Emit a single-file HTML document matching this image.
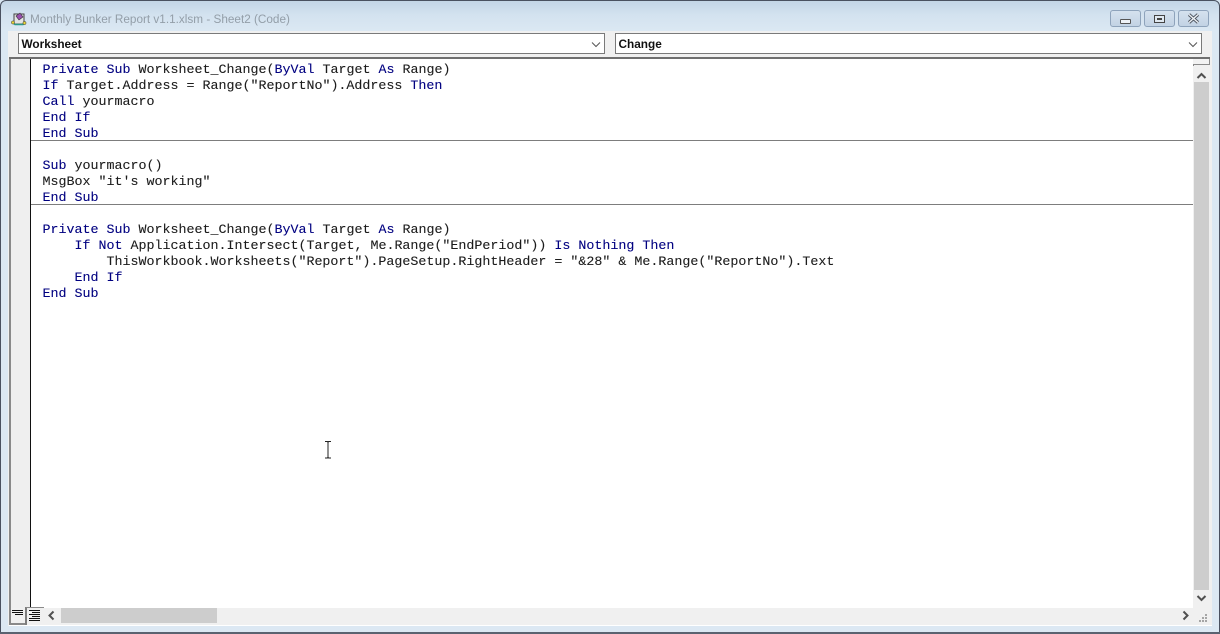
<!DOCTYPE html>
<html>
<head>
<meta charset="utf-8">
<style>
html,body{margin:0;padding:0;width:1220px;height:634px;overflow:hidden;background:#d9e6f2}
.a{position:absolute}
#win{position:absolute;left:0;top:0;width:1220px;height:634px;box-sizing:border-box;border:1px solid #4a5160;border-radius:6px 6px 0 0;background:linear-gradient(180deg,#c3d5e6 0,#d3e2ef 14px,#dbe8f3 30px,#dce8f3 100%)}
#title{position:absolute;left:30px;top:10.5px;font:11.75px/18px "Liberation Sans",sans-serif;color:#939ea8;white-space:nowrap}
#inner{position:absolute;left:8px;top:31px;width:1204px;height:595px;background:#f0f0f0}
.combo{position:absolute;top:33px;height:21px;box-sizing:border-box;border:1px solid #7a7a7a;background:#fff;font:bold 11.8px/20px "Liberation Sans",sans-serif;color:#111;padding-left:2.5px}
.code{position:absolute;left:42.5px;font:13.33px/16px "Liberation Mono",monospace;color:#1b1b1b;white-space:pre;-webkit-text-stroke:.1px #222}
.code b{font-weight:normal;color:#000080;-webkit-text-stroke:.1px #000080}
.rule{position:absolute;left:31px;width:1162px;height:1px;background:#7d7d7d}
.wb{position:absolute;top:10px;width:31px;height:17px;box-sizing:border-box;border:1px solid #8ea3bb;border-radius:3px;background:linear-gradient(180deg,#d5e2ee,#c2d3e4)}
</style>
</head>
<body>
<div id="win"></div>
<div id="inner"></div>
<svg class="a" style="left:11px;top:12px" width="16" height="15" viewBox="0 0 16 15">
<rect x="3" y="2" width="10" height="10" fill="#e4e4e4" stroke="#444"/>
<path d="M5 4L9 1 12 5 8 8Z" fill="#9a4fb0" stroke="#333" stroke-width=".6"/>
<path d="M1 10l3 2.5h8l2-2.5" stroke="#2a9a8a" stroke-width="1.5" fill="none"/>
<circle cx="2" cy="10.5" r="1.6" fill="#e8d53a" stroke="#333" stroke-width=".5"/>
<circle cx="13.5" cy="11" r="1.6" fill="#e8d53a" stroke="#333" stroke-width=".5"/>
</svg>
<div id="title">Monthly Bunker Report v1.1.xlsm - Sheet2 (Code)</div>
<div class="wb" style="left:1110px"><div class="a" style="left:9px;top:8px;width:9px;height:3px;border:1px solid #555;background:#eef2f6;border-radius:1px"></div></div>
<div class="wb" style="left:1144px"><div class="a" style="left:9px;top:4px;width:9px;height:6px;border:1px solid #444;background:#dfe8f0"></div><div class="a" style="left:12px;top:7px;width:5px;height:2px;background:#444"></div></div>
<div class="wb" style="left:1178px">
<svg class="a" style="left:8px;top:2px" width="13" height="11" viewBox="0 0 13 11"><path d="M2 1.5L11 9.5M11 1.5L2 9.5" stroke="#4d5560" stroke-width="3.2" fill="none"/><path d="M2 1.5L11 9.5M11 1.5L2 9.5" stroke="#eef2f6" stroke-width="1.4" fill="none"/></svg>
</div>

<div class="combo" style="left:18px;width:587px">Worksheet
<svg class="a" style="left:572px;top:7px" width="10" height="7" viewBox="0 0 10 7"><path d="M1 1.5L5 5.5 9 1.5" stroke="#555" stroke-width="1" fill="none"/></svg></div>
<div class="combo" style="left:615px;width:587px">Change
<svg class="a" style="left:572px;top:7px" width="10" height="7" viewBox="0 0 10 7"><path d="M1 1.5L5 5.5 9 1.5" stroke="#555" stroke-width="1" fill="none"/></svg></div>

<!-- editor -->
<div class="a" style="left:9px;top:57px;width:1201px;height:2px;background:#6f6f6f"></div>
<div class="a" style="left:9px;top:59px;width:2px;height:566px;background:#8a8a8a"></div>
<div class="a" style="left:11px;top:59px;width:19px;height:549px;background:#efefef"></div>
<div class="a" style="left:30px;top:59px;width:1px;height:549px;background:#111"></div>
<div class="a" style="left:31px;top:59px;width:1162px;height:549px;background:#fff"></div>

<div class="rule" style="top:140px"></div>
<div class="rule" style="top:204px"></div>

<div class="code" style="top:63px"><b>Private Sub</b> Worksheet_Change(<b>ByVal</b> Target <b>As</b> Range)
<b>If</b> Target.Address = Range("ReportNo").Address <b>Then</b>
<b>Call</b> yourmacro
<b>End If</b>
<b>End Sub</b>

<b>Sub</b> yourmacro()
MsgBox "it's working"
<b>End Sub</b>

<b>Private Sub</b> Worksheet_Change(<b>ByVal</b> Target <b>As</b> Range)
    <b>If Not</b> Application.Intersect(Target, Me.Range("EndPeriod")) <b>Is Nothing Then</b>
        ThisWorkbook.Worksheets("Report").PageSetup.RightHeader = "&amp;28" &amp; Me.Range("ReportNo").Text
    <b>End If</b>
<b>End Sub</b></div>

<!-- I-beam -->
<svg class="a" style="left:323px;top:441px" width="10" height="18" viewBox="0 0 10 18"><path d="M2 .5H4.5L5 1.5 5.5 .5H8M5 1.5V16M2 17H4.5L5 16 5.5 17H8" stroke="#222" fill="none"/></svg>

<!-- vertical scrollbar -->
<div class="a" style="left:1193px;top:59px;width:17px;height:549px;background:#f0f0f0"></div>
<div class="a" style="left:1193px;top:59px;width:17px;height:6px;box-sizing:border-box;background:#f2f2f2;border:1px solid #8a8a8a;border-top:0;border-left:0"></div>
<div class="a" style="left:1193px;top:65px;width:1px;height:1px;background:#888"></div>
<svg class="a" style="left:1196px;top:71px" width="11" height="9" viewBox="0 0 11 9"><path d="M1.5 7L5.5 3 9.5 7" stroke="#505050" stroke-width="2" fill="none"/></svg>
<div class="a" style="left:1194px;top:82px;width:15px;height:508px;background:#cdcdcd"></div>
<svg class="a" style="left:1196px;top:594px" width="11" height="9" viewBox="0 0 11 9"><path d="M1.5 2L5.5 6 9.5 2" stroke="#505050" stroke-width="2" fill="none"/></svg>

<!-- horizontal bar -->
<div class="a" style="left:31px;top:608px;width:1179px;height:17px;background:#f0f0f0"></div>
<div class="a" style="left:9px;top:623px;width:18px;height:2px;background:#8a8a8a"></div>
<div class="a" style="left:25px;top:607px;width:2px;height:18px;background:#7d7d7d"></div>
<div class="a" style="left:26px;top:607px;width:18px;height:1px;background:#8a8a8a"></div>
<div class="a" style="left:11px;top:608px;width:14px;height:15px;background:#f0f0f0"></div>
<div class="a" style="left:27px;top:608px;width:16px;height:16px;background:#f0f0f0"></div>
<svg class="a" style="left:12px;top:609px" width="12" height="9" viewBox="0 0 12 9"><path d="M0 1.5H11M0 3.5H11M3 5.5H11" stroke="#111" fill="none"/></svg>
<svg class="a" style="left:29px;top:610px" width="12" height="12" viewBox="0 0 12 12"><path d="M0 .5H11M3 2.5H11M0 4.5H11M3 6.5H11M0 8.5H11M0 10.5H11" stroke="#111" fill="none"/></svg>
<svg class="a" style="left:47px;top:610px" width="9" height="11" viewBox="0 0 9 11"><path d="M6.5 1.5L2.5 5.5 6.5 9.5" stroke="#505050" stroke-width="2" fill="none"/></svg>
<div class="a" style="left:61px;top:608px;width:156px;height:15px;background:#cdcdcd"></div>
<svg class="a" style="left:1181px;top:610px" width="9" height="11" viewBox="0 0 9 11"><path d="M2.5 1.5L6.5 5.5 2.5 9.5" stroke="#505050" stroke-width="2" fill="none"/></svg>
<svg class="a" style="left:1199px;top:614px" width="10" height="10" viewBox="0 0 10 10" fill="#a5a5a5"><rect x="6" y="0" width="2" height="2"/><rect x="3" y="3" width="2" height="2"/><rect x="6" y="3" width="2" height="2"/><rect x="0" y="6" width="2" height="2"/><rect x="3" y="6" width="2" height="2"/><rect x="6" y="6" width="2" height="2"/></svg>
<div class="a" style="left:9px;top:625px;width:1203px;height:1px;background:#fff"></div>
<div class="a" style="left:0;top:632px;width:1220px;height:2px;background:#5a6270"></div>
</body>
</html>
